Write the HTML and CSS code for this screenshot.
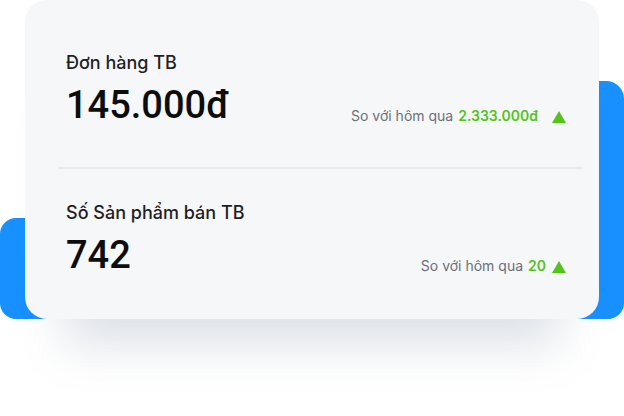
FILE: index.html
```html
<!DOCTYPE html>
<html lang="vi">
<head>
<meta charset="utf-8">
<title>Thống kê</title>
<link rel="stylesheet" href="styles.css">
</head>
<body>
<div class="stage">
  <div class="card">
    <section class="stat">
      <h3 class="stat-title">Đơn hàng TB</h3>
      <div class="stat-row">
        <div class="stat-value">145.000đ</div>
        <div class="compare">
          <span class="compare-label">So với hôm qua</span>
          <span class="compare-value compare-value--wide">2.333.000đ</span>
          <span class="up"></span>
        </div>
      </div>
    </section>
    <hr class="divider">
    <section class="stat">
      <h3 class="stat-title">Số Sản phẩm bán TB</h3>
      <div class="stat-row">
        <div class="stat-value">742</div>
        <div class="compare">
          <span class="compare-label">So với hôm qua</span>
          <span class="compare-value">20</span>
          <span class="up"></span>
        </div>
      </div>
    </section>
  </div>
</div>
</body>
</html>
```
FILE: styles.css
```css
* { box-sizing: border-box; }
html, body {
  margin: 0;
  padding: 0;
  background: #ffffff;
}
body {
  width: 624px;
  height: 416px;
  overflow: hidden;
  font-family: "Inter", "Noto Sans", sans-serif;
}
.stage {
  position: relative;
  width: 624px;
  height: 416px;
  padding-left: 25px;
}
.stage::before,
.stage::after {
  content: "";
  position: absolute;
  background: #1890ff;
  z-index: 0;
}
.stage::before {
  left: 0;
  top: 218px;
  width: 120px;
  height: 101px;
  border-radius: 16px 0 0 16px;
}
.stage::after {
  right: 0;
  top: 81px;
  width: 120px;
  height: 238px;
  border-radius: 0 18px 16px 0;
}
.card {
  position: relative;
  z-index: 1;
  width: 574px;
  height: 319px;
  background: #f6f7f9;
  border-radius: 22px;
  box-shadow: 0 65px 45px -40px rgba(110, 125, 150, 0.24);
}
.stat {
  padding: 52px 33px 0 41px;
}
.stat + .divider + .stat {
  padding-top: 0;
}
.stat-title {
  margin: 0;
  font-size: 18px;
  line-height: 22px;
  font-weight: 500;
  color: #1f1f1f;
}
.stat-row {
  display: flex;
  justify-content: space-between;
  align-items: flex-end;
  margin-top: 7px;
}
.stat-value {
  font-family: "Roboto", "Liberation Sans", sans-serif;
  font-size: 38px;
  line-height: 48px;
  font-weight: 500;
  color: #0d0d0d;
}
.compare {
  display: flex;
  align-items: center;
  margin-bottom: 3px;
  font-size: 14px;
  line-height: 20px;
  color: #6b7078;
}
.compare-value {
  margin-left: 5px;
  color: #52c41a;
  font-weight: 600;
}
.compare-value--wide {
  margin-right: 8px;
}
.up {
  width: 0;
  height: 0;
  margin-left: 6px;
  margin-top: 2px;
  border-left: 7px solid transparent;
  border-right: 7px solid transparent;
  border-bottom: 12px solid #52c41a;
}
.divider {
  margin: 38px 16px 33px 33px;
  border: 0;
  height: 2px;
  background: #e8eaed;
}
```
